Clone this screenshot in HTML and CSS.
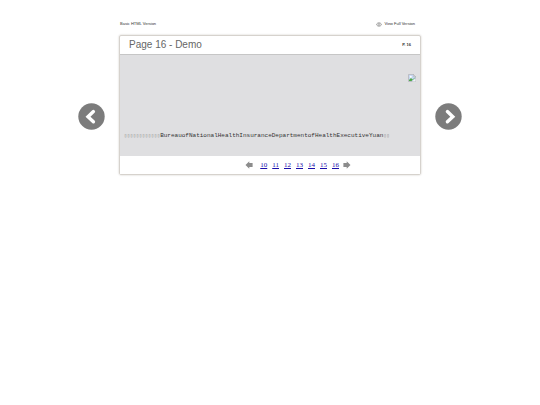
FILE: index.html
```
<!DOCTYPE html>
<html lang="en">
<head>
    <meta charset="utf-8">
    <meta name="viewport" content="width=device-width,initial-scale=1">
    <title>Page 16 - Demo</title>
    <link rel="stylesheet" href="styles.css">
</head>
<body>
    <div class="topbar">
        <span class="version">Basic HTML Version</span>
        <a class="full-version" href="#full">
            <svg class="eye" viewBox="0 0 12 10" aria-hidden="true">
                <path d="M0.8 5C3 0.4 9 0.4 11.2 5C9 9.6 3 9.6 0.8 5Z" fill="none" stroke="#777" stroke-width="1.3"/>
                <circle cx="6" cy="5" r="1.9" fill="none" stroke="#777" stroke-width="1.2"/>
            </svg>
            View Full Version
        </a>
    </div>

    <div class="viewer">
        <a class="turn" href="#prev" aria-label="Previous page">
            <svg viewBox="0 0 27 27">
                <circle cx="13.5" cy="13.5" r="13.2" fill="#7c7c7c"/>
                <path d="M15.4 8.6L10 13.7L15.4 18.8" fill="none" stroke="#fff" stroke-width="3.4" stroke-linecap="round"/>
            </svg>
        </a>

        <main class="sheet">
            <header class="sheet-head">
                <h1>Page 16 - Demo</h1>
                <span class="page-no">P. 16</span>
            </header>

            <div class="content">
                <svg class="picture" viewBox="0 0 16 16" role="img" aria-label="picture">
                    <path d="M1 1H11L15 5V15H1Z" fill="#c5d6f2" stroke="#a3a3a3"/>
                    <path d="M11 1V5H15Z" fill="#fff" stroke="#a3a3a3"/>
                    <circle cx="5.5" cy="5.5" r="2" fill="#fff"/>
                    <path d="M2 14V12L6 8L9 11L14 7V8L7 14Z" fill="#50a846"/>
                    <path d="M8 15L15 9V15Z" fill="#f4f4f4"/>
                </svg>
                <p class="text"><span class="blank">▯▯▯▯▯▯▯▯▯▯▯▯</span>BureauofNationalHealthInsuranceDepartmentofHealthExecutiveYuan<span class="blank">▯▯</span></p>
            </div>

            <nav class="pager">
                <a class="step" href="#prev" aria-label="Previous">
                    <svg viewBox="0 0 8 8"><path d="M0.5 4L4.3 0.3V2H7.6V6H4.3V7.7Z" fill="#8c8c8c"/></svg>
                </a>
                <span class="pages">
                    <a href="#10">10</a>
                    <a href="#11">11</a>
                    <a href="#12">12</a>
                    <a href="#13">13</a>
                    <a href="#14">14</a>
                    <a href="#15">15</a>
                    <a href="#16">16</a>
                </span>
                <a class="step" href="#next" aria-label="Next">
                    <svg viewBox="0 0 8 8"><path d="M7.5 4L3.7 0.3V2H0.4V6H3.7V7.7Z" fill="#8c8c8c"/></svg>
                </a>
            </nav>
        </main>

        <a class="turn" href="#next" aria-label="Next page">
            <svg viewBox="0 0 27 27">
                <circle cx="13.5" cy="13.5" r="13.2" fill="#7c7c7c"/>
                <path d="M12.4 8.6L17.8 13.7L12.4 18.8" fill="none" stroke="#fff" stroke-width="3.4" stroke-linecap="round"/>
            </svg>
        </a>
    </div>
</body>
</html>
```
FILE: styles.css
```
* {
    box-sizing: border-box;
}

body {
    margin: 0;
    background-color: #ffffff;
    font-family: "Liberation Sans", Arial, sans-serif;
    color: #333333;
}

svg {
    display: block;
}

.topbar {
    display: flex;
    justify-content: space-between;
    align-items: center;

    padding: 20px 125px 0 120px;

    font-size: 4px;
    line-height: 8px;
}

.full-version {
    display: flex;
    align-items: center;
    gap: 2px;

    color: #333333;
    text-decoration: none;
}

.eye {
    width: 6px;
    height: 5px;
}

.viewer {
    display: flex;
    align-items: flex-start;
    gap: 14px;

    padding: 7px 78px;
}

.turn {
    flex: none;

    width: 27px;

    margin-top: 68px;
}

.sheet {
    flex: 1;

    min-width: 0;

    border: 1px solid #d6d2cd;
    border-radius: 2px;

    box-shadow: 0 0 2px #c9c4be;
}

.sheet-head {
    display: flex;
    justify-content: space-between;
    align-items: center;

    padding: 0 9px;

    border-bottom: 1px solid #c6c6c6;

    line-height: 18px;
}

h1 {
    margin: 0;

    font-size: 10px;
    font-weight: normal;
    color: #666666;
}

.page-no {
    font-size: 4px;
    font-weight: bold;
}

.content {
    padding: 19px 4px 16px;

    background-color: #dfdfe1;
}

.picture {
    width: 8px;
    height: 8px;

    margin-left: auto;
}

.text {
    margin: 50px 0 0;

    font-family: "Liberation Mono", "DejaVu Sans Mono", monospace;
    font-size: 6px;
    line-height: 8px;
    white-space: nowrap;
}

.blank {
    font-size: 5px;
    color: #888888;
}

.pager {
    display: flex;
    align-items: center;
    justify-content: flex-end;
    gap: 4px;

    padding-right: 69px;

    background-color: #ffffff;

    line-height: 18px;
}

.step {
    width: 8px;
}

.pages {
    display: flex;
    gap: 5px;

    padding-left: 3px;

    font-family: "Liberation Serif", "Times New Roman", serif;
    font-size: 7px;
}

.pages a {
    color: #1a0dab;
}
```
